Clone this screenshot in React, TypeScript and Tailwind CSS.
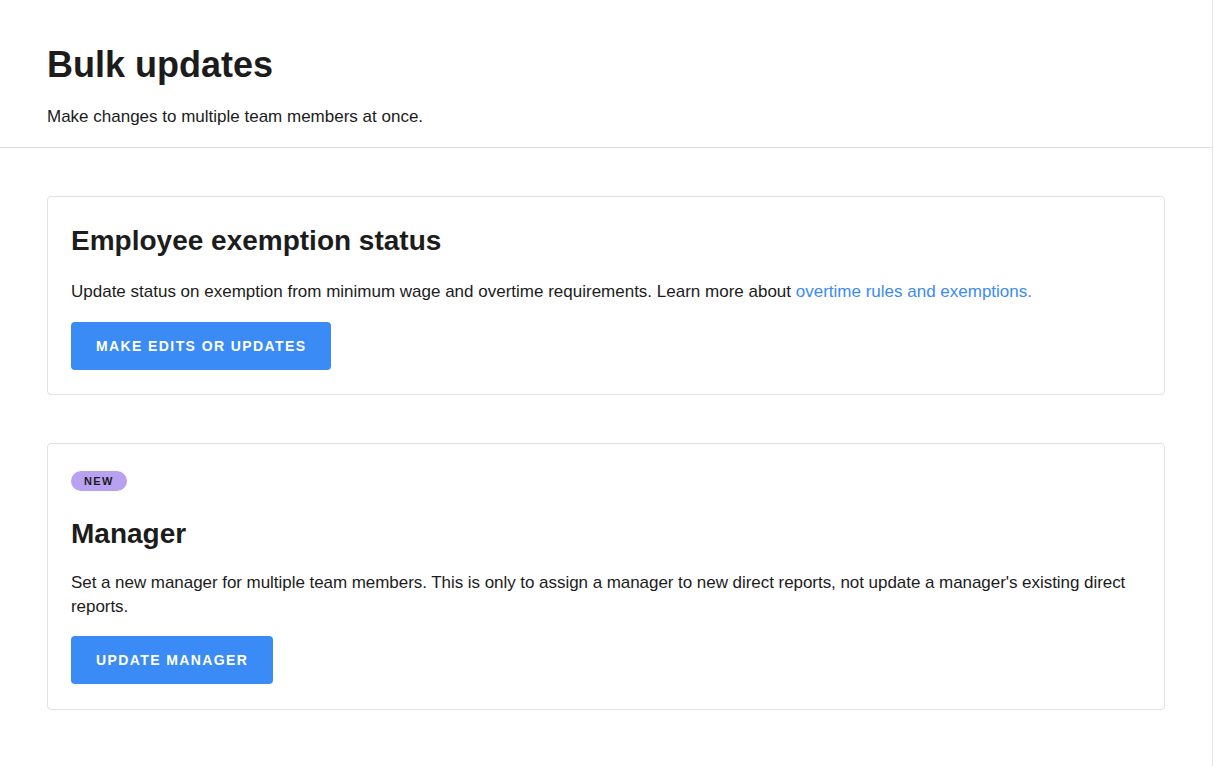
import React from 'react';

const font = { fontFamily: '"Liberation Sans", Arial, sans-serif' };

function ActionButton({ label }: { label: string }) {
  return (
    <button className="h-12 px-[25px] rounded-[4px] bg-[#3b8bf6] text-white text-[14px] font-bold uppercase tracking-[0.1em]">
      {label}
    </button>
  );
}

export default function App() {
  return (
    <div className="min-h-screen bg-white text-[#1c1c1c]" style={font}>
      <main className="w-[1213px] min-h-screen border-r border-[#e4e4e4]">
        {/* Header */}
        <header className="px-[47px] pt-[45px] pb-[18px] border-b border-[#dedede]">
          <h1 className="text-[36px] leading-[40px] font-bold">Bulk updates</h1>
          <p className="mt-5 text-[17px] leading-6">Make changes to multiple team members at once.</p>
        </header>

        <div className="px-[47px] pt-12 flex flex-col gap-12">
          {/* Exemption card */}
          <section className="w-[1118px] border border-[#e2e2e2] rounded-[4px] px-[23px] py-6">
            <h2 className="text-[28px] leading-10 font-bold">Employee exemption status</h2>
            <p className="mt-[19px] text-[17px] leading-6">
              Update status on exemption from minimum wage and overtime requirements. Learn more about{' '}
              <a className="text-[#3b8bf6]" href="#">overtime rules and exemptions.</a>
            </p>
            <div className="mt-[18px]">
              <ActionButton label="Make edits or updates" />
            </div>
          </section>

          {/* Manager card */}
          <section className="w-[1118px] border border-[#e2e2e2] rounded-[4px] px-[23px] pt-6 pb-[25px]">
            <span className="inline-flex items-center h-5 px-[13px] rounded-full bg-[#b9a1f1] text-[11px] font-bold tracking-[0.12em] text-[#1c1c1c]">
              NEW
            </span>
            <h2 className="mt-[22px] text-[28px] leading-10 font-bold">Manager</h2>
            <p className="mt-[17px] text-[17px] leading-6 tracking-[-0.05px]">
              Set a new manager for multiple team members. This is only to assign a manager to new direct reports, not update a manager's existing direct reports.
            </p>
            <div className="mt-[17px]">
              <ActionButton label="Update manager" />
            </div>
          </section>
        </div>
      </main>
    </div>
  );
}
